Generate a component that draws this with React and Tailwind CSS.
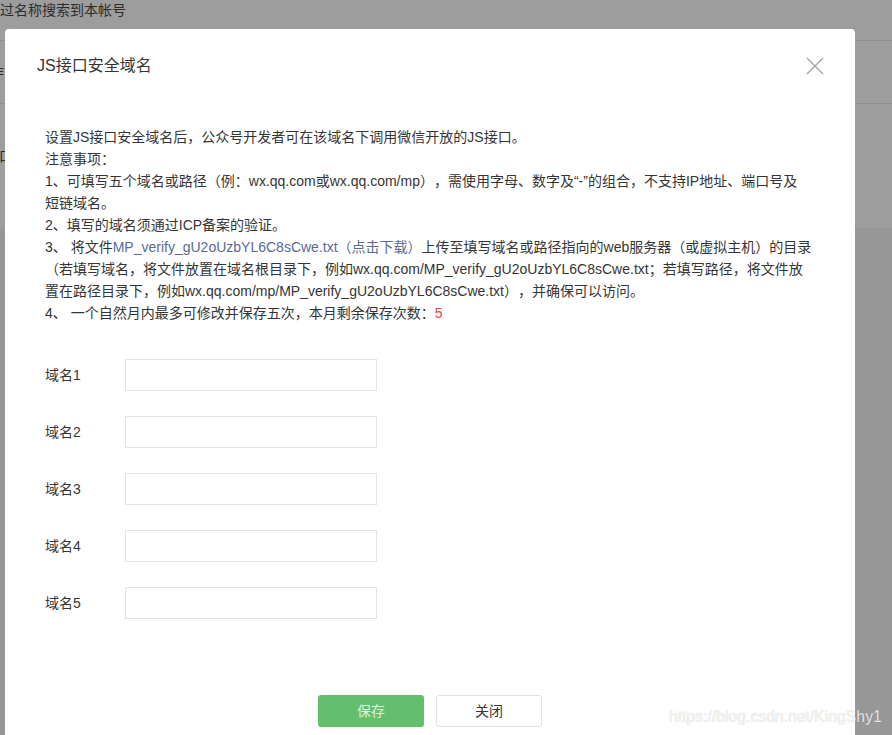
import React from 'react';

const font = { fontFamily: '"Liberation Sans", "Noto Sans CJK SC", sans-serif' };

const App = () => {
    const domains = [1, 2, 3, 4, 5];

    return (
        <div className="relative h-[735px] w-[892px] overflow-hidden bg-[#9d9d9d] text-[#2c2c2c] [text-spacing-trim:space-all]" style={font}>
            {/* page behind the mask */}
            <div className="flex h-full flex-col text-[14px] leading-[22px]">
                <div className="h-[40px] leading-[20px]">过名称搜索到本帐号</div>
                <div className="flex h-[63px] items-center border-t border-[#8f8f8f]">
                    <span className="-ml-[10px]">作</span>
                </div>
                <div className="h-[125px] border-t border-[#8f8f8f] pt-[41px]">
                    <span className="-ml-[1px]">口</span>
                </div>
                <div className="flex-1 bg-[#979797]"></div>
            </div>

            {/* dialog */}
            <div className="absolute left-[5px] top-[29px] bottom-0 flex w-[850px] flex-col rounded-t-[4px] bg-white text-[#353535]">
                <div className="flex items-start justify-between pl-[32px] pr-[31px] pt-[25px]">
                    <h3 className="text-[16px] leading-[24px]">JS接口安全域名</h3>
                    <button className="mt-[3px] text-[#a3a3a3]" aria-label="关闭">
                        <svg width="18" height="18" viewBox="0 0 18 18" fill="none">
                            <path d="M1 1L17 17M17 1L1 17" stroke="currentColor" strokeWidth="1.4" />
                        </svg>
                    </button>
                </div>

                <div className="whitespace-nowrap pl-[40px] pr-[40px] pt-[48px] text-[14px] leading-[22px]">
                    <p>设置JS接口安全域名后，公众号开发者可在该域名下调用微信开放的JS接口。</p>
                    <p>注意事项：</p>
                    <p>
                        1、可填写五个域名或路径（例：wx.qq.com或wx.qq.com/mp），需使用字母、数字及“-”的组合，不支持IP地址、端口号及<br />短链域名。
                    </p>
                    <p>2、填写的域名须通过ICP备案的验证。</p>
                    <p>
                        3、 将文件<a className="text-[#576b95]" href="#">MP_verify_gU2oUzbYL6C8sCwe.txt（点击下载）</a>上传至填写域名或路径指向的web服务器（或虚拟主机）的目录<br />
                        （若填写域名，将文件放置在域名根目录下，例如wx.qq.com/MP_verify_gU2oUzbYL6C8sCwe.txt；若填写路径，将文件放<br />
                        置在路径目录下，例如wx.qq.com/mp/MP_verify_gU2oUzbYL6C8sCwe.txt），并确保可以访问。
                    </p>
                    <p>
                        4、 一个自然月内最多可修改并保存五次，本月剩余保存次数：<span className="text-[#e64340]">5</span>
                    </p>

                    <div className="mt-[35px] flex flex-col gap-[25px]">
                        {domains.map((n) => (
                            <div key={n} className="flex items-center">
                                <label className="w-[80px] text-[14px]">域名{n}</label>
                                <input className="h-[32px] w-[252px] border border-[#e4e4e4] px-2 text-[14px] outline-none" />
                            </div>
                        ))}
                    </div>
                </div>

                <div className="mt-[76px] flex justify-center gap-[12px]">
                    <button className="h-[32px] w-[106px] rounded-[3px] bg-[#63bf6d] text-[14px] text-[#dcf2df]">保存</button>
                    <button className="h-[32px] w-[106px] rounded-[3px] border border-[#e0e0e0] bg-white text-[14px] text-[#353535]">关闭</button>
                </div>
            </div>

            <div className="pointer-events-none absolute left-[669px] top-[706px] text-[15.75px] leading-[22px] text-white/80 [text-shadow:0_0_1px_rgba(0,0,0,0.25)]" style={{ fontFamily: '"Liberation Sans", sans-serif' }}>
                https://blog.csdn.net/KingShy1
            </div>
        </div>
    );
};

export default App;
